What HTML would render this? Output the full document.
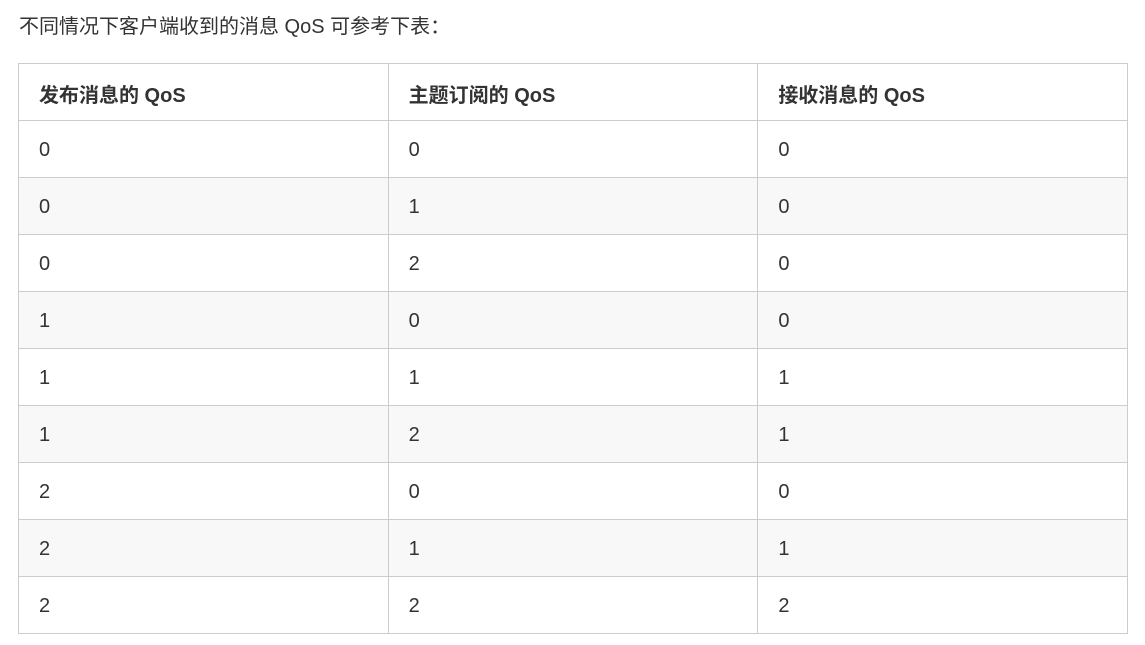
<!DOCTYPE html>
<html><head><meta charset="utf-8"><style>
html,body{margin:0;padding:0;background:#fff;width:1145px;height:645px;overflow:hidden}
body{font-family:"Liberation Sans","Noto Sans CJK SC",sans-serif;color:#333}
p{position:absolute;left:19px;top:11px;margin:0;font-size:20px;line-height:32px;color:#333}
table{position:absolute;left:18px;top:63px;border-collapse:collapse;width:1110px;font-size:20px}
td,th{border:1px solid #ccc;padding:3px 0 0 20px;text-align:left;height:53px;width:349px}
th{font-weight:bold;color:#333}
tbody tr:nth-child(odd) td{background:#fff}
tbody tr:nth-child(even) td{background:#f8f8f8}
</style></head><body>
<p>不同情况下客户端收到的消息 QoS 可参考下表：</p>
<table><thead><tr><th>发布消息的 QoS</th><th>主题订阅的 QoS</th><th>接收消息的 QoS</th></tr></thead>
<tbody>
<tr><td>0</td><td>0</td><td>0</td></tr>
<tr><td>0</td><td>1</td><td>0</td></tr>
<tr><td>0</td><td>2</td><td>0</td></tr>
<tr><td>1</td><td>0</td><td>0</td></tr>
<tr><td>1</td><td>1</td><td>1</td></tr>
<tr><td>1</td><td>2</td><td>1</td></tr>
<tr><td>2</td><td>0</td><td>0</td></tr>
<tr><td>2</td><td>1</td><td>1</td></tr>
<tr><td>2</td><td>2</td><td>2</td></tr>
</tbody></table>
</body></html>
